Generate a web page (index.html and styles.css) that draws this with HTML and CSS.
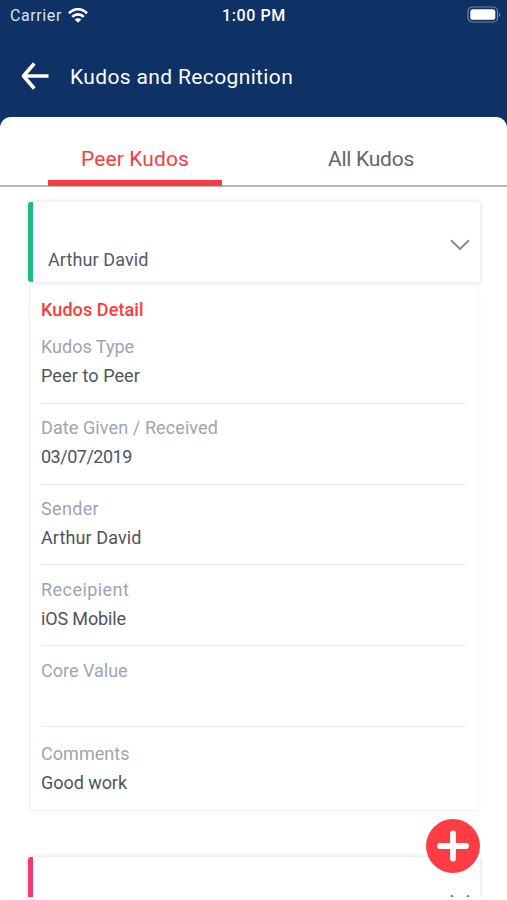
FILE: index.html
```html
<!DOCTYPE html>
<html lang="en">
<head>
<meta charset="utf-8">
<title>Kudos and Recognition</title>
<link rel="stylesheet" href="styles.css">
</head>
<body>
<div class="app">
  <header class="header">
    <div class="status">
      <div class="carrier"><span>Carrier</span>
        <svg class="wifi" width="20" height="15" viewBox="0 0 20 15" fill="none" stroke="#fff" stroke-width="2.7"><path d="M1 5.3C6-.1 14-.1 19 5.3M4.2 8.9c3.3-3.4 8.3-3.4 11.6 0"/><path d="M6.7 11.500c1.900-1.800 4.700-1.800 6.600 0L10 14.800z" fill="#fff" stroke="none"/></svg>
      </div>
      <span class="time">1:00 PM</span>
      <svg class="battery" width="34" height="18" viewBox="0 0 34 18"><rect x="1" y="1" width="29.5" height="15" rx="4.5" fill="none" stroke="#76869f" stroke-width="1.2"/><rect x="3.3" y="3.2" width="25" height="10.6" rx="2.6" fill="#fff"/><path d="M32 6.4c1.8.8 1.8 3.6 0 4.4z" fill="#76869f"/></svg>
    </div>
    <div class="navbar">
      <svg class="back" width="28" height="28" viewBox="0 0 28 28" fill="none" stroke="#fff" stroke-width="3.6" stroke-linejoin="round"><path d="M13.300 1.500 2.500 14l10.800 12.500M2.500 14h25"/></svg>
      <h1 class="title">Kudos and Recognition</h1>
    </div>
  </header>
  <main class="sheet">
    <nav class="tabs">
      <div class="tab tab-active">Peer Kudos</div>
      <div class="tab tab-all">All Kudos</div>
    </nav>
    <section class="list">
      <div class="card">
        <span class="name">Arthur David</span>
        <svg class="chevron" width="20" height="12" viewBox="0 0 20 12" fill="none" stroke="#85878c" stroke-width="1.9"><path d="m1 1.300 9 8.700 9-8.700"/></svg>
      </div>
      <div class="details">
        <h2 class="heading">Kudos Detail</h2>
        <div class="row row-high"><div class="label l-type">Kudos Type</div><div class="value">Peer to Peer</div></div>
        <div class="row row-high"><div class="label">Date Given / Received</div><div class="value v-date">03/07/2019</div></div>
        <div class="row row-high"><div class="label l-sender">Sender</div><div class="value">Arthur David</div></div>
        <div class="row"><div class="label l-rec">Receipient</div><div class="value v-ios">iOS Mobile</div></div>
        <div class="row"><div class="label l-core">Core Value</div><div class="value"></div></div>
        <div class="row"><div class="label l-com">Comments</div><div class="value v-good">Good work</div></div>
      </div>
      <div class="card card-pink">
        <svg class="chevron" width="20" height="12" viewBox="0 0 20 12" fill="none" stroke="#85878c" stroke-width="1.9"><path d="m1 1.300 9 8.700 9-8.700"/></svg>
      </div>
    </section>
  </main>
  <div class="fab"><svg width="54" height="54" viewBox="0 0 54 54" stroke="#fff" stroke-width="5.800" stroke-linecap="round"><path d="M27 14.500v25M14 27h26"/></svg></div>
</div>
</body>
</html>
```
FILE: styles.css
```css
* { box-sizing: border-box; }
body { margin: 0; background: #fff; font-family: Roboto, "Liberation Sans", sans-serif; }
svg { display: block; flex: none; }
.app { position: relative; height: 897px; overflow: hidden; background: #0e3166; }
.header { height: 117px; color: #fff; }
.status { display: grid; grid-template-columns: 1fr auto 1fr; align-items: center; height: 30px; padding: 0 6px 0 10px; }
.carrier { display: flex; align-items: center; gap: 6px; font-size: 16px; letter-spacing: .6px; color: #dce3ee; }
.time { margin-right: 3px; font-size: 16px; font-weight: 500; letter-spacing: .6px; }
.battery { justify-self: end; }
.navbar { display: flex; align-items: center; height: 92px; padding-left: 21px; }
.title { margin: 2px 0 0 21px; font-size: 21px; font-weight: 400; letter-spacing: .36px; }
.sheet { height: 780px; background: #fff; border-radius: 11px 11px 0 0; }
.tabs { display: flex; justify-content: space-between; height: 70px; padding: 0 48px; border-bottom: 2px solid #b8b8b8; }
.tab { width: 174px; height: 69px; padding-top: 15px; text-align: center; font-size: 21px; line-height: 54px; letter-spacing: .1px; color: #666; }
.tab-active { color: #fb3b40; border-bottom: 6px solid #fb3b40; }
.tab-all { margin-right: 1px; letter-spacing: -.25px; }
.list { padding: 15px 27px 0 28px; }
.card { display: flex; justify-content: space-between; height: 80px; padding: 0 10px 0 15px; border-left: 5px solid #20ba84; border-radius: 3px 0 0 3px; background: #fff; box-shadow: 0 0 5px rgba(0, 0, 0, .16); }
.name { margin-top: 43px; font-size: 18px; line-height: 29px; letter-spacing: .1px; color: #555860; }
.chevron { margin-top: 37px; margin-left: auto; }
.details { height: 529px; margin: 0 1px; padding: 14px 12px 0 11px; border: 1px solid #f2f2f3; border-top: 0; box-shadow: 0 2px 5px rgba(0, 0, 0, .025); }
.heading { margin: 0; font-size: 18px; font-weight: 500; line-height: 27px; letter-spacing: .1px; color: #fb3b40; }
.row { height: 80.8px; padding-top: 10px; border-bottom: 1px solid #e9eaec; font-size: 18px; line-height: 29px; letter-spacing: .1px; }
.row-high { padding-top: 9px; }
.row:last-child { padding-top: 12px; border: 0; }
.label { color: #9ca5b2; }
.value { color: #50535b; }
.l-type { letter-spacing: 0; }
.l-sender { letter-spacing: .35px; }
.l-rec { letter-spacing: .45px; }
.l-core { letter-spacing: 0; }
.l-com { letter-spacing: .05px; }
.v-date { letter-spacing: -.5px; }
.v-ios { letter-spacing: -.15px; }
.v-good { letter-spacing: -.05px; }
.card-pink { margin-top: 46px; border-left-color: #f33878; }
.fab { position: absolute; left: 426px; top: 819px; width: 54px; height: 54px; border-radius: 50%; background: #fd3d43; }
```
